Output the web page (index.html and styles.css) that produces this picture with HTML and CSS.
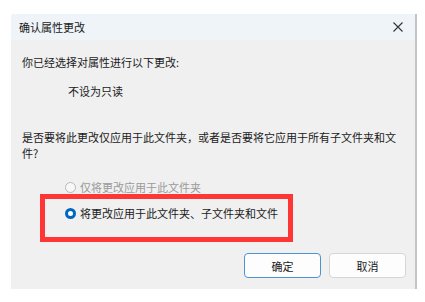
FILE: index.html
```html
<!DOCTYPE html>
<html lang="zh-CN">
<head>
    <meta charset="UTF-8">
    <meta name="viewport" content="width=device-width, initial-scale=1.0">
    <title>确认属性更改</title>
    <link rel="stylesheet" href="styles.css">
</head>
<body>
    <div class="dialog">
        <div class="title-bar">
            <span class="title">确认属性更改</span>
            <span class="close">
                <svg width="10" height="10" viewBox="0 0 10 10">
                    <path d="M0.5 0.5 L9.5 9.5 M9.5 0.5 L0.5 9.5" stroke="#333" stroke-width="1.1" fill="none"/>
                </svg>
            </span>
        </div>
        <div class="content">
            <p class="intro">你已经选择对属性进行以下更改:</p>
            <p class="change">不设为只读</p>
            <p class="question">是否要将此更改仅应用于此文件夹，或者是否要将它应用于所有子文件夹和文件?</p>

            <div class="option disabled">
                <span class="radio"></span>
                <span>仅将更改应用于此文件夹</span>
            </div>
            <div class="highlight">
                <div class="option">
                    <span class="radio checked"></span>
                    <span>将更改应用于此文件夹、子文件夹和文件</span>
                </div>
            </div>

            <div class="buttons">
                <button class="btn primary">确定</button>
                <button class="btn">取消</button>
            </div>
        </div>
    </div>
</body>
</html>
```

FILE: styles.css
```css
* {
    margin: 0;
    padding: 0;
    box-sizing: border-box;
}
body {
    font-family: "Noto Sans CJK SC", "Noto Sans", sans-serif;
    font-size: 11px;
    color: #1a1a1a;
    background: #fff;
    height: 302px;
    overflow: hidden;
}
.dialog {
    margin: 14px 0 0 11px;
    width: 406px;
    height: 275px;
    background: #f0f0f0;
    border-right: 2px solid #c4c4c4;
    border-top-left-radius: 3px;
    display: flex;
    flex-direction: column;
}
.title-bar {
    height: 26px;
    background: #eef4f7;
    display: flex;
    align-items: center;
    justify-content: space-between;
    padding: 0 8px 0 8px;
    border-top-left-radius: 3px;
}
.title {
    line-height: 16px;
}
.close {
    display: flex;
    width: 10px;
    height: 10px;
    margin-right: 4px;
}
.content {
    padding: 14px 0 0 11px;
    line-height: 16px;
    flex: 1;
    display: flex;
    flex-direction: column;
}
.change {
    margin: 13px 0 0 46px;
}
.question {
    margin-top: 30px;
    width: 378px;
}
.option {
    display: flex;
    align-items: center;
    gap: 4px;
}
.option.disabled {
    margin: 18px 0 0 43px;
    color: #9a9a9a;
}
.radio {
    width: 11px;
    height: 11px;
    border-radius: 50%;
    border: 1px solid #b8b8b8;
    background: #f7f7f7;
}
.radio.checked {
    border: 3px solid #0067c0;
    background: #fff;
}
.highlight {
    margin: -1px 0 0 18px;
    width: 253px;
    height: 48px;
    border: 5px solid #ff3636;
    padding: 6px 0 0 20px;
}
.buttons {
    display: flex;
    justify-content: flex-end;
    gap: 8px;
    margin-top: 11px;
    padding-right: 9px;
}
.btn {
    width: 77px;
    height: 25px;
    font-family: inherit;
    font-size: 11px;
    color: #1a1a1a;
    background: #fdfdfd;
    border: 1px solid #d6d6d6;
    border-radius: 4px;
}
.btn.primary {
    border: 1px solid #4a94d4;
}
```
